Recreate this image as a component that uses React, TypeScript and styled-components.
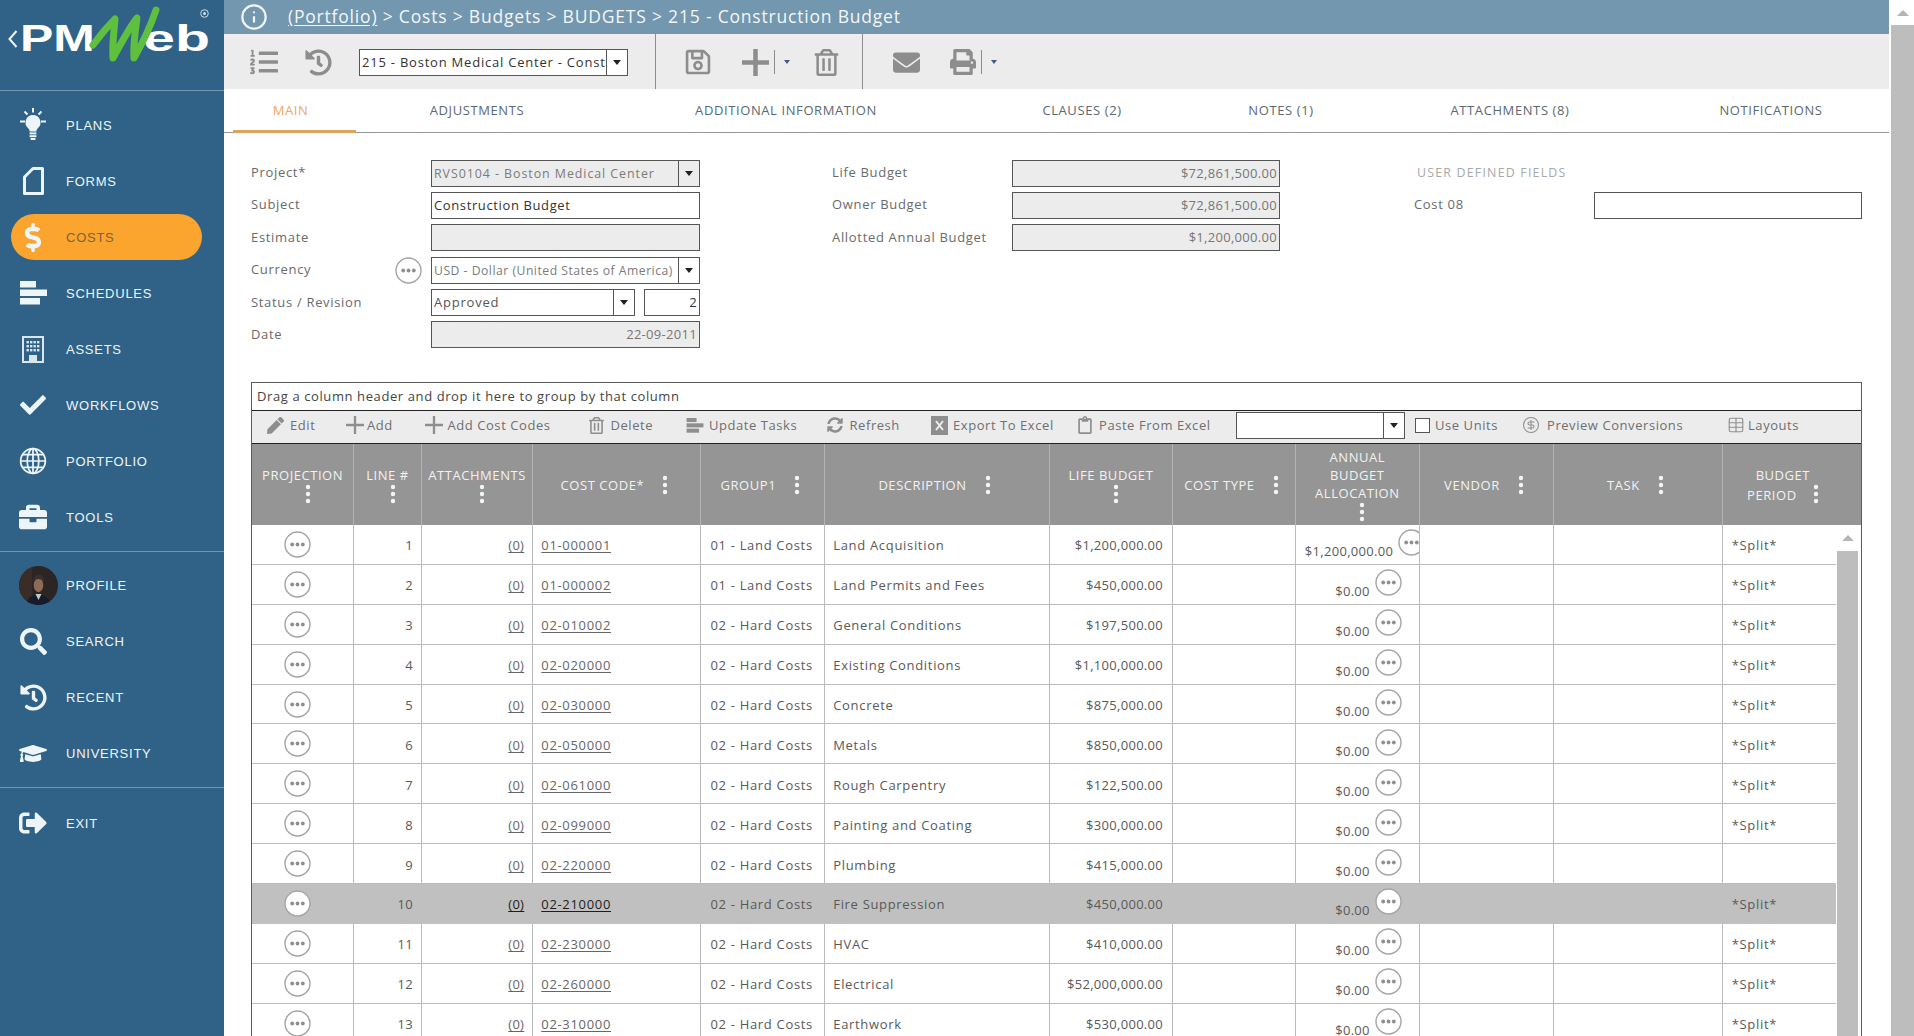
import React from 'react'
import styled, { createGlobalStyle } from 'styled-components'
import {
  FaBriefcase, FaCheck, FaDollarSign, FaGraduationCap, FaHistory, FaListOl, FaPen, FaPrint,
  FaEnvelope, FaRegClipboard, FaRegSave, FaRegTrashAlt, FaSearch, FaSignOutAlt, FaSyncAlt,
} from 'react-icons/fa'
import { CircleDollarSign, Info, Table } from 'lucide-react'

const GlobalStyle = createGlobalStyle`
  html, body { margin: 0; padding: 0; height: 100%; overflow: hidden; background: #fff; }
  body { font-family: "Open Sans", "Liberation Sans", sans-serif; }
  * { box-sizing: border-box; }
`

// column widths of the grid up to TASK, the last column takes what is left
const COLS = '102.2px 67.7px 111.4px 168.2px 123.8px 224.5px 123.3px 122.8px 124px 134.2px 168.7px 1fr'

const Page = styled.div`
  display: flex;
  height: 100vh;
  overflow: hidden;
`

/* ---------- sidebar ---------- */
const Sidebar = styled.aside`
  width: 224px;
  flex: none;
  background: #2f6286;
  color: #eef5f9;
`
const LogoArea = styled.div`
  height: 91px;
  border-bottom: 1px solid #6f97ae;
  position: relative;
  display: flex;
  align-items: flex-start;
  padding: 17px 0 0 8px;
`
const LogoBack = styled.svg`
  margin-top: 13px;
  margin-right: 2px;
  flex: none;
`
const LogoWord = styled.span<{ $w: number; $sx: number }>`
  font-family: "Liberation Sans", Arial, sans-serif;
  font-weight: 700;
  font-size: 37px;
  line-height: 44px;
  color: #fff;
  width: ${p => p.$w}px;
  flex: none;
  transform: scaleX(${p => p.$sx});
  transform-origin: left center;
  white-space: nowrap;
`
const LogoMark = styled.svg`
  position: absolute;
  left: 85px;
  top: 4px;
`
const LogoReg = styled.svg`
  position: absolute;
  left: 200px;
  top: 9px;
`
const NavGroup = styled.nav<{ $pt: number; $pb: number; $line?: boolean }>`
  padding: ${p => p.$pt}px 0 ${p => p.$pb}px 0;
  border-bottom: ${p => (p.$line ? '1px solid #6f97ae' : 'none')};
`
const NavItem = styled.div<{ $active?: boolean }>`
  height: 56px;
  display: flex;
  align-items: center;
  padding-left: 19px;
  position: relative;
  font-family: "Liberation Sans", Arial, sans-serif;
  font-size: 13px;
  letter-spacing: 0.75px;
  color: ${p => (p.$active ? '#7f6238' : '#eef5f9')};
  &::before {
    content: ${p => (p.$active ? '""' : 'none')};
    position: absolute;
    left: 11px;
    top: 5px;
    width: 191px;
    height: 46px;
    border-radius: 23px;
    background: #fba52e;
  }
`
const NavIcon = styled.span<{ $start?: boolean }>`
  width: 28px;
  height: 40px;
  margin-right: 19px;
  flex: none;
  display: flex;
  align-items: center;
  justify-content: ${p => (p.$start ? 'flex-start' : 'center')};
  color: #eef5f9;
  position: relative;
`
const NavLabel = styled.span`
  position: relative;
`

/* ---------- header ---------- */
const Main = styled.main`
  flex: none;
  width: 1665px;
  display: flex;
  flex-direction: column;
  height: 100%;
  overflow: hidden;
`
const TopBar = styled.header`
  height: 34px;
  flex: none;
  background: #7397ae;
  color: #f3f6f8;
  display: flex;
  align-items: center;
  padding-left: 16px;
  gap: 20px;
`
const TrailText = styled.span`
  font-size: 17.5px;
  letter-spacing: 0.8px;
  line-height: 30px;
  padding-bottom: 2px;
`
const Crumb = styled.a`
  text-decoration: underline;
  text-underline-offset: 2px;
`
const ToolBar = styled.div`
  height: 55px;
  flex: none;
  background: #ececec;
  border-top: 3px solid #f1ecef;
  display: flex;
  align-items: center;
  padding-bottom: 2px;
`
const ToolSlot = styled.span<{ $w: number }>`
  width: ${p => p.$w}px;
  flex: none;
  display: flex;
  align-items: center;
  justify-content: center;
  color: #8d8d8d;
`
const ToolDivider = styled.span`
  width: 1px;
  align-self: stretch;
  margin: -3px 0 -2px;
  background: #8d8d8d;
  flex: none;
`
const MiniDivider = styled.span`
  width: 1px;
  height: 24px;
  background: #8d8d8d;
  flex: none;
`
const BlueCaret = styled.span`
  width: 0;
  height: 0;
  margin-left: 9px;
  border-left: 3.5px solid transparent;
  border-right: 3.5px solid transparent;
  border-top: 4px solid #3d5a92;
`
const Combo = styled.div<{ $w?: number; $off?: boolean; $muted?: boolean; $strong?: boolean }>`
  display: flex;
  width: ${p => (p.$w ? `${p.$w}px` : '100%')};
  height: 27px;
  flex: none;
  border: 1px solid #555;
  background: ${p => (p.$off ? '#ececec' : '#fff')};
  color: ${p => (p.$off || p.$muted ? '#7b7b7b' : p.$strong ? '#333' : '#555')};
  font-size: ${p => (p.$off ? '12.4px' : p.$muted ? '12.2px' : '13px')};
  letter-spacing: ${p => (p.$off ? '0.95px' : p.$muted ? '0.5px' : '0.78px')};
`
const ComboText = styled.span`
  flex: 1;
  min-width: 0;
  overflow: hidden;
  white-space: nowrap;
  padding: 0 2px;
  line-height: 25px;
`
const ComboArrow = styled.span`
  width: 21px;
  flex: none;
  border-left: 1px solid #555;
  display: flex;
  align-items: center;
  justify-content: center;
  &::after {
    content: "";
    border-left: 4px solid transparent;
    border-right: 4px solid transparent;
    border-top: 5px solid #222;
  }
`

/* ---------- tabs ---------- */
const Tabs = styled.div`
  height: 44px;
  flex: none;
  border-bottom: 1px solid #999;
  display: flex;
  padding-left: 9px;
`
const Tab = styled.div<{ $w: number; $active?: boolean; $shift?: number }>`
  width: ${p => p.$w}px;
  flex: none;
  height: 44px;
  line-height: 43px;
  text-align: center;
  padding-right: ${p => p.$shift || 0}px;
  font-size: 13px;
  letter-spacing: 0.6px;
  white-space: nowrap;
  color: ${p => (p.$active ? '#eba866' : '#5c6872')};
  border-bottom: ${p => (p.$active ? '3px solid #dca55c' : 'none')};
`

/* ---------- form ---------- */
const Form = styled.section`
  height: 249px;
  flex: none;
  padding: 26.5px 0 0 27px;
  display: flex;
`
const FormColumn = styled.div<{ $w: number }>`
  width: ${p => p.$w}px;
  flex: none;
  display: flex;
  flex-direction: column;
  gap: 5.4px;
`
const FormRow = styled.div`
  display: flex;
  align-items: center;
  height: 27px;
`
const Label = styled.label`
  width: 180px;
  flex: none;
  display: flex;
  align-items: center;
  justify-content: space-between;
  padding: 0 9px 2px 0;
  font-size: 13px;
  letter-spacing: 0.68px;
  color: #6a6a6a;
`
const LabelDots = styled.span`
  display: flex;
  margin-top: 2px;
`
const FieldWrap = styled.div<{ $w?: number }>`
  width: ${p => p.$w || 269}px;
  flex: none;
  display: flex;
  justify-content: space-between;
`
const Input = styled.div<{ $off?: boolean; $right?: boolean; $w?: number }>`
  width: ${p => (p.$w ? `${p.$w}px` : '100%')};
  height: 27px;
  flex: none;
  border: 1px solid #555;
  background: ${p => (p.$off ? '#ececec' : '#fff')};
  color: ${p => (p.$off ? '#777' : '#333')};
  text-align: ${p => (p.$right ? 'right' : 'left')};
  padding: 0 2px;
  font-size: 13px;
  letter-spacing: ${p => (p.$right ? '0.3px' : '0.62px')};
  line-height: 25px;
`
const Caption = styled.div`
  padding: 0 0 2px 3px;
  font-size: 12.4px;
  letter-spacing: 1.2px;
  color: #a8a8a8;
`

/* ---------- grid ---------- */
const Grid = styled.section`
  width: 1611px;
  margin-left: 27px;
  flex: 1;
  min-height: 0;
  border: 1px solid #5b5b5b;
  border-bottom: 0;
  display: flex;
  flex-direction: column;
  overflow: hidden;
`
const GroupPanel = styled.div`
  height: 27px;
  flex: none;
  padding-left: 5px;
  font-size: 13px;
  letter-spacing: 0.6px;
  line-height: 26px;
  color: #444;
`
const GridTools = styled.div`
  height: 34px;
  flex: none;
  background: #ececec;
  border-top: 1px solid #222;
  border-bottom: 1px solid #222;
  display: flex;
  align-items: center;
  padding: 0 0 4px 13px;
  font-size: 13px;
  letter-spacing: 0.56px;
  color: #6f6f6f;
`
const GridTool = styled.div<{ $w: number }>`
  width: ${p => p.$w}px;
  flex: none;
  display: flex;
  align-items: center;
  white-space: nowrap;
`
const GridToolIcon = styled.span<{ $gap: number }>`
  width: 20px;
  height: 20px;
  margin-right: ${p => p.$gap}px;
  flex: none;
  display: flex;
  align-items: center;
  justify-content: center;
  color: #8e8e8e;
`
const CheckBox = styled.span`
  width: 15px;
  height: 15px;
  margin-right: 5px;
  flex: none;
  border: 1px solid #555;
  background: #fff;
`
const HeaderRow = styled.div`
  height: 81px;
  flex: none;
  display: grid;
  grid-template-columns: ${COLS};
  background: #959595;
`
const HeaderCell = styled.div<{ $stack?: boolean }>`
  display: flex;
  flex-direction: ${p => (p.$stack ? 'column' : 'row')};
  align-items: center;
  justify-content: center;
  gap: ${p => (p.$stack ? '0' : '18px')};
  padding: 0 ${p => (p.$stack ? '3px' : '8px')} 0 3px;
  border-right: 1px solid #b3b3b3;
  color: #f2f2f2;
  font-size: 13px;
  letter-spacing: 0.55px;
  line-height: 18px;
  text-align: center;
  &:last-child { border-right: 0; padding-right: 21px; }
`
const StackKebab = styled.span`
  display: flex;
  margin-left: 10px;
`
const BudgetPeriod = styled.div`
  display: grid;
  grid-template-columns: auto auto;
  column-gap: 16px;
  align-items: end;
  justify-items: center;
`
const BudgetWord = styled.span`
  grid-column: 1 / 3;
`
const GridBody = styled.div`
  flex: 1;
  min-height: 0;
  display: flex;
  overflow: hidden;
`
const RowList = styled.div`
  width: 1584.4px;
  flex: none;
`
const Row = styled.div<{ $active?: boolean }>`
  height: 39.9px;
  display: grid;
  grid-template-columns: ${COLS};
  background: ${p => (p.$active ? '#c0c0c0' : '#fff')};
  border-bottom: 1px solid ${p => (p.$active ? '#c0c0c0' : '#bcbcbc')};
  color: #595959;
  font-size: 13px;
  letter-spacing: 0.68px;
`
const Cell = styled.div<{ $align?: string; $active?: boolean; $pad?: number; $num?: boolean }>`
  display: flex;
  align-items: center;
  justify-content: ${p => p.$align || 'flex-start'};
  padding: 2px ${p => p.$pad ?? 8}px 0;
  border-right: 1px solid ${p => (p.$active ? '#c0c0c0' : '#bcbcbc')};
  letter-spacing: ${p => (p.$num ? '0.3px' : 'inherit')};
  white-space: nowrap;
  overflow: hidden;
  &:last-child { border-right: 0; }
`
const CircleCell = styled(Cell)`
  justify-content: center;
  padding: 0 10px 0 0;
`
const AnnualCell = styled(Cell)`
  justify-content: safe flex-end;
  padding: 0 17px 0 9px;
  letter-spacing: 0.3px;
`
const AnnualValue = styled.span`
  margin-top: 14px;
  margin-right: 5px;
  flex: none;
`
const AnnualDots = styled.span`
  flex: none;
  display: flex;
  margin-bottom: 3px;
`
const LinkText = styled.a<{ $active?: boolean }>`
  color: ${p => (p.$active ? '#1d1d1d' : '#666')};
  text-decoration: underline;
  text-underline-offset: 2px;
`
const GridScroll = styled.div`
  flex: 1;
  display: flex;
  flex-direction: column;
  align-items: center;
  padding-right: 2px;
`
const GridThumb = styled.div`
  width: 21px;
  flex: 1;
  background: #bdbdbd;
`
const ArrowUp = styled.span<{ $h: number }>`
  height: ${p => p.$h}px;
  flex: none;
  display: flex;
  align-items: center;
  &::after {
    content: "";
    border-left: 6px solid transparent;
    border-right: 6px solid transparent;
    border-bottom: 6px solid #b4b4b4;
  }
`
const PageScroll = styled.div`
  flex: 1;
  margin-left: 2px;
  display: flex;
  flex-direction: column;
  align-items: center;
`
const PageThumb = styled.div`
  width: 100%;
  flex: 1;
  background: #bdbdbd;
`

/* ---------- drawn icons ---------- */
const MoreCircle = ({ size = 27 }: { size?: number }) => (
  <svg width={size} height={size} viewBox="0 0 27 27" style={{ flex: 'none' }}>
    <circle cx="13.5" cy="13.5" r="12.5" fill="#fff" stroke="#a5a5a5" strokeWidth="1.4" />
    <circle cx="8.2" cy="13.5" r="1.9" fill="#8f8f8f" />
    <circle cx="13.5" cy="13.5" r="1.9" fill="#8f8f8f" />
    <circle cx="18.8" cy="13.5" r="1.9" fill="#8f8f8f" />
  </svg>
)

const Kebab = () => (
  <svg width="6" height="20" viewBox="0 0 6 20" style={{ flex: 'none' }}>
    <circle cx="3" cy="3" r="2.2" fill="#f4f4f4" />
    <circle cx="3" cy="10" r="2.2" fill="#f4f4f4" />
    <circle cx="3" cy="17" r="2.2" fill="#f4f4f4" />
  </svg>
)

const BulbIcon = () => (
  <svg width="28" height="34" viewBox="0 0 28 34" fill="#eef5f9">
    <path d="M14 7a7.5 7.5 0 0 0-4.6 13.4c1 .9 1.2 1.8 1.2 3h6.8c0-1.2.2-2.1 1.2-3A7.5 7.5 0 0 0 14 7z" />
    <rect x="10.6" y="24.4" width="6.8" height="2" />
    <rect x="10.6" y="27.2" width="6.8" height="2" />
    <rect x="11.6" y="30" width="4.8" height="2" />
    <path d="M13 0h2v4.500h-2zM1 12.500h5v2H1zM22 12.500h5v2h-5z" />
    <path d="M4.800 4.200l1.400-1.400 3 3-1.400 1.400zM23.200 4.200l-1.400-1.400-3 3 1.400 1.400z" />
  </svg>
)

const FormIcon = () => (
  <svg width="21" height="28" viewBox="0 0 21 28" fill="none" stroke="#eef5f9">
    <path d="M1.500 10L10 1.500h9.500v25h-18z" strokeWidth="3" strokeLinejoin="round" />
  </svg>
)

const GanttIcon = ({ w = 27, h = 24, color = '#eef5f9' }: { w?: number; h?: number; color?: string }) => (
  <svg width={w} height={h} viewBox="0 0 27 24" fill={color}>
    <rect x="0" y="0" width="16" height="6.500" />
    <rect x="0" y="8.500" width="27" height="6.500" />
    <rect x="0" y="17" width="20" height="6.500" />
  </svg>
)

const BuildingIcon = () => (
  <svg width="22" height="27" viewBox="0 0 22 27">
    <rect x="1" y="1" width="20" height="25" fill="#2f6286" stroke="#d9e6ee" strokeWidth="2" />
    {[5, 9, 13].map(y =>
      [4.500, 8, 11.500, 15].map(x => <rect key={`${x}-${y}`} x={x} y={y} width="2.400" height="2.400" fill="#d9e6ee" />)
    )}
    <rect x="7" y="19" width="8" height="7" fill="#d9e6ee" />
  </svg>
)

const GlobeIcon = () => (
  <svg width="29" height="28" viewBox="0 0 29 28" fill="none" stroke="#eef5f9" strokeWidth="1.800">
    <circle cx="14.500" cy="14" r="12.800" />
    <ellipse cx="14.500" cy="14" rx="6" ry="12.800" />
    <path d="M14.500 1.200v25.600M1.700 14h25.600M3.500 7.500h22M3.500 20.500h22" />
  </svg>
)

const Portrait = () => (
  <svg width="39" height="39" viewBox="0 0 39 39" style={{ flex: 'none' }}>
    <defs>
      <clipPath id="face-clip"><circle cx="19.500" cy="19.500" r="19.500" /></clipPath>
    </defs>
    <g clipPath="url(#face-clip)">
      <rect width="39" height="39" fill="#2b2623" />
      <rect x="0" y="0" width="13" height="39" fill="#3a2c26" />
      <path d="M7 39c1-7 6-10 12-11 6 1 12 4 13 11z" fill="#171c2b" />
      <path d="M16.500 28l3 6 3-6z" fill="#c4c8d0" />
      <ellipse cx="19.500" cy="19" rx="4.800" ry="7.200" fill="#8f6a57" />
      <path d="M14.500 17c-.5-6 2-8.500 5.500-8.500s5.500 3 5 8.500c-1.500-3-3-4-5.500-4s-3.500 1-5 4z" fill="#3b3029" />
    </g>
  </svg>
)

const PlusIcon = ({ size = 27, weight = 4.500 }: { size?: number; weight?: number }) => (
  <svg width={size} height={size} viewBox="0 0 27 27" stroke="currentColor" strokeWidth={weight}>
    <path d="M0 13.500h27M13.500 0v27" />
  </svg>
)

const ExcelIcon = () => (
  <svg width="17" height="19" viewBox="0 0 17 19">
    <rect width="17" height="19" fill="#8e8e8e" />
    <path d="M5 5l7 9M12 5l-7 9" stroke="#ececec" strokeWidth="2" />
  </svg>
)

/* ---------- data ---------- */
const rows = [
  ['01-000001', '01 - Land Costs', 'Land Acquisition', '$1,200,000.00', '$1,200,000.00'],
  ['01-000002', '01 - Land Costs', 'Land Permits and Fees', '$450,000.00', '$0.00'],
  ['02-010002', '02 - Hard Costs', 'General Conditions', '$197,500.00', '$0.00'],
  ['02-020000', '02 - Hard Costs', 'Existing Conditions', '$1,100,000.00', '$0.00'],
  ['02-030000', '02 - Hard Costs', 'Concrete', '$875,000.00', '$0.00'],
  ['02-050000', '02 - Hard Costs', 'Metals', '$850,000.00', '$0.00'],
  ['02-061000', '02 - Hard Costs', 'Rough Carpentry', '$122,500.00', '$0.00'],
  ['02-099000', '02 - Hard Costs', 'Painting and Coating', '$300,000.00', '$0.00'],
  ['02-220000', '02 - Hard Costs', 'Plumbing', '$415,000.00', '$0.00'],
  ['02-210000', '02 - Hard Costs', 'Fire Suppression', '$450,000.00', '$0.00'],
  ['02-230000', '02 - Hard Costs', 'HVAC', '$410,000.00', '$0.00'],
  ['02-260000', '02 - Hard Costs', 'Electrical', '$52,000,000.00', '$0.00'],
  ['02-310000', '02 - Hard Costs', 'Earthwork', '$530,000.00', '$0.00'],
]

const navTop = [
  { label: 'PLANS', icon: <BulbIcon /> },
  { label: 'FORMS', icon: <FormIcon /> },
  { label: 'COSTS', icon: <FaDollarSign size={29} />, active: true },
  { label: 'SCHEDULES', icon: <GanttIcon /> },
  { label: 'ASSETS', icon: <BuildingIcon /> },
  { label: 'WORKFLOWS', icon: <FaCheck size={26} /> },
  { label: 'PORTFOLIO', icon: <GlobeIcon /> },
  { label: 'TOOLS', icon: <FaBriefcase size={28} /> },
]
const navBottom = [
  { label: 'SEARCH', icon: <FaSearch size={27} /> },
  { label: 'RECENT', icon: <FaHistory size={27} /> },
  { label: 'UNIVERSITY', icon: <FaGraduationCap size={29} /> },
]

const gridTools = [
  { label: 'Edit', w: 80, gap: 5, icon: <FaPen size={17} /> },
  { label: 'Add', w: 79, gap: 2, icon: <PlusIcon size={18} weight={3.5} /> },
  { label: 'Add Cost Codes', w: 162, gap: 3.5, icon: <PlusIcon size={18} weight={3.5} /> },
  { label: 'Delete', w: 99, gap: 4.5, icon: <FaRegTrashAlt size={17} /> },
  { label: 'Update Tasks', w: 140, gap: 4, icon: <GanttIcon w={18} h={15} color="#8e8e8e" /> },
  { label: 'Refresh', w: 104, gap: 4.5, icon: <FaSyncAlt size={16} /> },
  { label: 'Export To Excel', w: 146, gap: 4, icon: <ExcelIcon /> },
  { label: 'Paste From Excel', w: 161, gap: 4, icon: <FaRegClipboard size={18} /> },
]

const headers = ['PROJECTION', 'LINE #', 'ATTACHMENTS']

function App() {
  return (
    <Page>
      <GlobalStyle />
      <Sidebar>
        <LogoArea>
          <LogoBack width="10" height="18" viewBox="0 0 10 18" fill="none" stroke="#eef5f9" strokeWidth="2">
            <path d="M8.500 1L1.500 9l7 8" />
          </LogoBack>
          <LogoWord $w={123} $sx={1.35}>PM</LogoWord>
          <LogoWord $w={60} $sx={1.55}>eb</LogoWord>
          <LogoMark width="80" height="60" viewBox="0 0 80 60" fill="none" stroke="#5fbf3f" strokeWidth="7" strokeLinecap="round" strokeLinejoin="round">
            <path d="M8 41C16 30 23 22 30 15C29 28 27 42 28 54C37 38 44 24 52 14C50 28 48 42 49 54C57 40 65 24 71 6" />
          </LogoMark>
          <LogoReg width="9" height="9" viewBox="0 0 9 9">
            <circle cx="4.500" cy="4.500" r="3.800" fill="none" stroke="#cfdde6" strokeWidth="1" />
            <circle cx="4.500" cy="4.500" r="1.500" fill="#cfdde6" />
          </LogoReg>
        </LogoArea>
        <NavGroup $pt={6} $pb={6} $line>
          {navTop.map(n => (
            <NavItem key={n.label} $active={n.active}>
              <NavIcon>{n.icon}</NavIcon>
              <NavLabel>{n.label}</NavLabel>
            </NavItem>
          ))}
        </NavGroup>
        <NavGroup $pt={5} $pb={6} $line>
          <NavItem>
            <NavIcon $start><Portrait /></NavIcon>
            <NavLabel>PROFILE</NavLabel>
          </NavItem>
          {navBottom.map(n => (
            <NavItem key={n.label}>
              <NavIcon>{n.icon}</NavIcon>
              <NavLabel>{n.label}</NavLabel>
            </NavItem>
          ))}
        </NavGroup>
        <NavGroup $pt={7} $pb={0}>
          <NavItem>
            <NavIcon><FaSignOutAlt size={28} /></NavIcon>
            <NavLabel>EXIT</NavLabel>
          </NavItem>
        </NavGroup>
      </Sidebar>

      <Main>
        <TopBar>
          <Info size={28} strokeWidth={1.9} />
          <TrailText><Crumb>(Portfolio)</Crumb> &gt; Costs &gt; Budgets &gt; BUDGETS &gt; 215 - Construction Budget</TrailText>
        </TopBar>

        <ToolBar>
          <ToolSlot $w={80}><FaListOl size={28} /></ToolSlot>
          <ToolSlot $w={28}><FaHistory size={27} /></ToolSlot>
          <ToolSlot $w={27} />
          <Combo $w={269} $strong>
            <ComboText>215 - Boston Medical Center - Construction Budget</ComboText>
            <ComboArrow />
          </Combo>
          <ToolSlot $w={27} />
          <ToolDivider />
          <ToolSlot $w={84}><FaRegSave size={28} /></ToolSlot>
          <ToolSlot $w={30}><PlusIcon /></ToolSlot>
          <ToolSlot $w={4} />
          <MiniDivider />
          <BlueCaret />
          <ToolSlot $w={72}><FaRegTrashAlt size={27} /></ToolSlot>
          <ToolDivider />
          <ToolSlot $w={87}><FaEnvelope size={27} /></ToolSlot>
          <ToolSlot $w={26}><FaPrint size={28} /></ToolSlot>
          <ToolSlot $w={5} />
          <MiniDivider />
          <BlueCaret />
        </ToolBar>

        <Tabs>
          <Tab $w={123} $active $shift={8}>MAIN</Tab>
          <Tab $w={242}>ADJUSTMENTS</Tab>
          <Tab $w={376}>ADDITIONAL INFORMATION</Tab>
          <Tab $w={216}>CLAUSES (2)</Tab>
          <Tab $w={182}>NOTES (1)</Tab>
          <Tab $w={276}>ATTACHMENTS (8)</Tab>
          <Tab $w={246}>NOTIFICATIONS</Tab>
        </Tabs>

        <Form>
          <FormColumn $w={581}>
            <FormRow>
              <Label>Project*</Label>
              <FieldWrap>
                <Combo $off>
                  <ComboText>RVS0104 - Boston Medical Center</ComboText>
                  <ComboArrow />
                </Combo>
              </FieldWrap>
            </FormRow>
            <FormRow>
              <Label>Subject</Label>
              <FieldWrap><Input>Construction Budget</Input></FieldWrap>
            </FormRow>
            <FormRow>
              <Label>Estimate</Label>
              <FieldWrap><Input $off /></FieldWrap>
            </FormRow>
            <FormRow>
              <Label>Currency <LabelDots><MoreCircle /></LabelDots></Label>
              <FieldWrap>
                <Combo $muted>
                  <ComboText>USD - Dollar (United States of America)</ComboText>
                  <ComboArrow />
                </Combo>
              </FieldWrap>
            </FormRow>
            <FormRow>
              <Label>Status / Revision</Label>
              <FieldWrap>
                <Combo $w={204}>
                  <ComboText>Approved</ComboText>
                  <ComboArrow />
                </Combo>
                <Input $w={56} $right>2</Input>
              </FieldWrap>
            </FormRow>
            <FormRow>
              <Label>Date</Label>
              <FieldWrap><Input $off $right>22-09-2011</Input></FieldWrap>
            </FormRow>
          </FormColumn>

          <FormColumn $w={582}>
            <FormRow>
              <Label>Life Budget</Label>
              <FieldWrap $w={268}><Input $off $right>$72,861,500.00</Input></FieldWrap>
            </FormRow>
            <FormRow>
              <Label>Owner Budget</Label>
              <FieldWrap $w={268}><Input $off $right>$72,861,500.00</Input></FieldWrap>
            </FormRow>
            <FormRow>
              <Label>Allotted Annual Budget</Label>
              <FieldWrap $w={268}><Input $off $right>$1,200,000.00</Input></FieldWrap>
            </FormRow>
          </FormColumn>

          <FormColumn $w={448}>
            <FormRow><Caption>USER DEFINED FIELDS</Caption></FormRow>
            <FormRow>
              <Label>Cost 08</Label>
              <FieldWrap $w={268}><Input /></FieldWrap>
            </FormRow>
          </FormColumn>
        </Form>

        <Grid>
          <GroupPanel>Drag a column header and drop it here to group by that column</GroupPanel>
          <GridTools>
            {gridTools.map(t => (
              <GridTool key={t.label} $w={t.w}>
                <GridToolIcon $gap={t.gap}>{t.icon}</GridToolIcon>
                {t.label}
              </GridTool>
            ))}
            <GridTool $w={179}>
              <Combo $w={169}>
                <ComboText />
                <ComboArrow />
              </Combo>
            </GridTool>
            <GridTool $w={106}>
              <CheckBox />
              Use Units
            </GridTool>
            <GridTool $w={205}>
              <GridToolIcon $gap={6}><CircleDollarSign size={18} strokeWidth={1.4} /></GridToolIcon>
              Preview Conversions
            </GridTool>
            <GridTool $w={100}>
              <GridToolIcon $gap={2}><Table size={18} strokeWidth={1.5} /></GridToolIcon>
              Layouts
            </GridTool>
          </GridTools>

          <HeaderRow>
            {headers.map(h => (
              <HeaderCell key={h} $stack><span>{h}</span><StackKebab><Kebab /></StackKebab></HeaderCell>
            ))}
            <HeaderCell>COST CODE*<Kebab /></HeaderCell>
            <HeaderCell>GROUP1<Kebab /></HeaderCell>
            <HeaderCell>DESCRIPTION<Kebab /></HeaderCell>
            <HeaderCell $stack><span>LIFE BUDGET</span><StackKebab><Kebab /></StackKebab></HeaderCell>
            <HeaderCell>COST TYPE<Kebab /></HeaderCell>
            <HeaderCell $stack><span>ANNUAL<br />BUDGET<br />ALLOCATION</span><StackKebab><Kebab /></StackKebab></HeaderCell>
            <HeaderCell>VENDOR<Kebab /></HeaderCell>
            <HeaderCell>TASK<Kebab /></HeaderCell>
            <HeaderCell>
              <BudgetPeriod>
                <BudgetWord>BUDGET</BudgetWord>
                <span>PERIOD</span>
                <Kebab />
              </BudgetPeriod>
            </HeaderCell>
          </HeaderRow>

          <GridBody>
            <RowList>
              {rows.map((r, i) => {
                const active = i === 9
                return (
                  <Row key={r[0]} $active={active}>
                    <CircleCell $active={active}><MoreCircle /></CircleCell>
                    <Cell $active={active} $align="flex-end" $num>{i + 1}</Cell>
                    <Cell $active={active} $align="flex-end" $num><LinkText $active={active}>(0)</LinkText></Cell>
                    <Cell $active={active}><LinkText $active={active}>{r[0]}</LinkText></Cell>
                    <Cell $active={active} $pad={9}>{r[1]}</Cell>
                    <Cell $active={active}>{r[2]}</Cell>
                    <Cell $active={active} $align="flex-end" $pad={9} $num>{r[3]}</Cell>
                    <Cell $active={active} />
                    <AnnualCell $active={active}>
                      <AnnualValue>{r[4]}</AnnualValue>
                      <AnnualDots><MoreCircle /></AnnualDots>
                    </AnnualCell>
                    <Cell $active={active} />
                    <Cell $active={active} />
                    <Cell $active={active} $pad={9}>{i === 8 ? '' : '*Split*'}</Cell>
                  </Row>
                )
              })}
            </RowList>
            <GridScroll>
              <ArrowUp $h={26} />
              <GridThumb />
            </GridScroll>
          </GridBody>
        </Grid>
      </Main>

      <PageScroll>
        <ArrowUp $h={25} />
        <PageThumb />
      </PageScroll>
    </Page>
  )
}

export default App
